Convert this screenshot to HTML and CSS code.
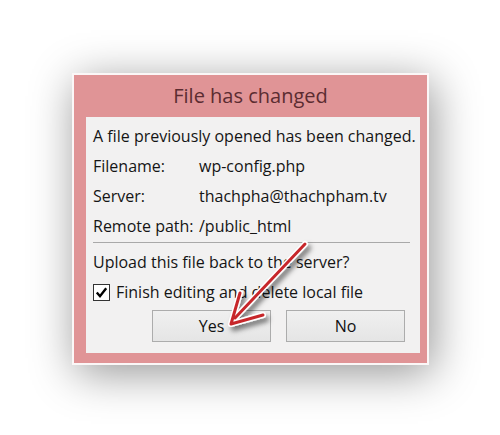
FILE: index.html
```html
<!DOCTYPE html>
<html lang="en">
<head>
    <meta charset="UTF-8"/>
    <title>File has changed</title>
    <link rel="stylesheet" href="styles.css">
</head>
<body>
<div class="stage">
    <div class="dialog">
        <div class="dialog-title">File has changed</div>
        <div class="dialog-body">
            <p class="line">A file previously opened has been changed.</p>
            <div class="info">
                <span>Filename:</span><span>wp-config.php</span>
                <span>Server:</span><span>thachpha@thachpham.tv</span>
                <span>Remote path:</span><span>/public_html</span>
            </div>
            <hr class="sep">
            <p class="line">Upload this file back to the server?</p>
            <label class="check">
                <span class="box">
                    <svg width="13" height="13" viewBox="0 0 13 13"><path d="M1.8 6.5 L5 10.2 L11.2 2.2" fill="none" stroke="#000" stroke-width="2.4"/></svg>
                </span>
                Finish editing and delete local file
            </label>
            <div class="buttons">
                <button class="btn">Yes</button>
                <button class="btn">No</button>
            </div>
        </div>
        <svg class="arrow" width="120" height="110" viewBox="0 0 120 110">
            <defs>
                <filter id="sh" x="-30%" y="-30%" width="170%" height="170%">
                    <feDropShadow dx="3" dy="4" stdDeviation="2.5" flood-color="#000" flood-opacity="0.5"/>
                </filter>
            </defs>
            <g filter="url(#sh)" stroke-linecap="round" stroke-linejoin="round" fill="none">
                <path d="M100 6 L30 80 M35 55 L26 86 L58 77" stroke="#fff" stroke-width="6"/>
                <path d="M100 6 L30 80 M35 55 L26 86 L58 77" stroke="#c7282c" stroke-width="3"/>
            </g>
        </svg>
    </div>
</div>
</body>
</html>
```
FILE: styles.css
```css
body {
    margin: 0;
    background: #fff;
    font-family: "Open Sans", "Noto Sans", sans-serif;
}

.stage {
    width: 500px;
    height: 435px;
    padding: 73px 0 0 72px;
    box-sizing: border-box;
}

.dialog {
    position: relative;
    width: 334px;
    height: 278px;
    padding: 0 7px 10px 12px;
    background: #e09496;
    border: 2px solid #fbf7f7;
    box-shadow: 4px 8px 42px rgba(0, 0, 0, 0.42);
    display: flex;
    flex-direction: column;
}

.dialog-title {
    height: 42px;
    line-height: 42px;
    text-align: center;
    font-size: 20px;
    color: #5b2c31;
    margin-left: -12px;
    margin-right: -7px;
}

.dialog-body {
    flex: 1;
    background: #f2f1f1;
    padding: 4px 0 0 7px;
    font-size: 16px;
    color: #151515;
    white-space: nowrap;
}

.line {
    margin: 0;
    line-height: 30px;
}

.info {
    display: grid;
    grid-template-columns: 106px 1fr;
    line-height: 30px;
}

.sep {
    margin: 1px 10px 4px 0;
    border: 0;
    border-top: 1px solid #a9a9a9;
}

.check {
    display: flex;
    align-items: center;
    gap: 6px;
    height: 30px;
}

.box {
    width: 15px;
    height: 15px;
    border: 1px solid #333;
    background: #fff;
    display: flex;
    align-items: center;
    justify-content: center;
}

.buttons {
    display: flex;
    justify-content: flex-end;
    gap: 15px;
    margin-top: 3px;
    padding-right: 15px;
}

.btn {
    width: 119px;
    height: 32px;
    border: 1px solid #acacac;
    background: linear-gradient(#f0f0f0, #e5e5e5);
    font-family: "Open Sans", "Noto Sans", sans-serif;
    font-size: 16px;
    color: #111;
    padding: 0;
}

.arrow {
    position: absolute;
    left: 131px;
    top: 163px;
}
```
